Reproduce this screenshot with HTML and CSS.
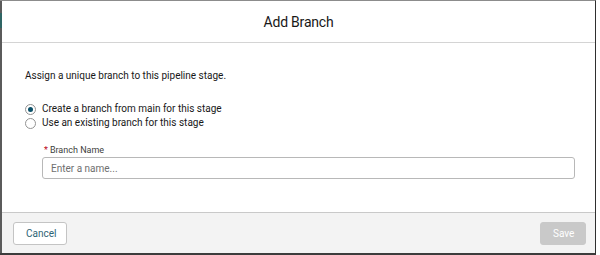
FILE: index.html
```html
<!DOCTYPE html>
<html lang="en">
<head>
    <meta charset="UTF-8">
    <title>Add Branch</title>
    <link rel="stylesheet" href="styles.css">
</head>
<body>
    <div class="backdrop">
        <div class="modal">
            <div class="modal-header">
                <h2 class="title">Add Branch</h2>
            </div>
            <div class="modal-body">
                <p class="intro">Assign a unique branch to this pipeline stage.</p>
                <div class="radio-group">
                    <label class="radio">
                        <input type="radio" name="mode" checked>
                        <span class="faux"></span>
                        <span class="radio-label">Create a branch from main for this stage</span>
                    </label>
                    <label class="radio">
                        <input type="radio" name="mode">
                        <span class="faux"></span>
                        <span class="radio-label">Use an existing branch for this stage</span>
                    </label>
                </div>
                <div class="field">
                    <label class="field-label" for="branch"><abbr class="required">*</abbr>Branch Name</label>
                    <input id="branch" class="input" type="text" placeholder="Enter a name...">
                </div>
            </div>
            <div class="modal-footer">
                <button class="btn btn-neutral">Cancel</button>
                <button class="btn btn-disabled" disabled>Save</button>
            </div>
        </div>
    </div>
</body>
</html>
```

FILE: styles.css
```css
html, body{
    margin: 0;
    padding: 0;
    background: #fff;
}
body{
    font-family: Roboto, "Liberation Sans", Arial, sans-serif;
    color: #181818;
}
.backdrop{
    width: 596px;
    height: 255px;
    box-sizing: border-box;
    padding-left: 2px;
    background: linear-gradient(to bottom, #5b5b5b 0 12px, #2f6564 12px 27px, #5b5b5b 27px);
    border-top: 1px solid #8c8c8c;
    border-right: 1px solid #2f2f2f;
    border-bottom: 2px solid #3c3c3c;
}
.modal{
    display: flex;
    flex-direction: column;
    height: 100%;
    background: #fff;
}
.modal-header{
    height: 41px;
    display: flex;
    align-items: center;
    justify-content: center;
    border-bottom: 1px solid #d4d4d4;
}
.title{
    margin: 0;
    font-size: 14px;
    font-weight: 400;
    letter-spacing: -0.2px;
}
.modal-body{
    flex: 1;
    padding: 26px 0 0 23px;
    font-size: 10px;
}
.intro{
    margin: 0 0 20px;
    line-height: 14px;
}
.radio-group{
    display: flex;
    flex-direction: column;
    gap: 2px;
}
.radio{
    display: flex;
    align-items: center;
    gap: 6px;
    height: 12px;
    line-height: 12px;
}
.radio input{
    display: none;
}
.radio .faux{
    width: 11px;
    height: 11px;
    box-sizing: border-box;
    border: 1px solid #939393;
    border-radius: 50%;
    background: #fff;
    display: flex;
    align-items: center;
    justify-content: center;
}
.radio input:checked + .faux::after{
    content: "";
    width: 5px;
    height: 5px;
    border-radius: 50%;
    background: #0b5069;
}
.field{
    margin: 15px 0 0 17px;
    width: 533px;
}
.field-label{
    display: block;
    color: #3e3e3c;
    font-size: 9px;
    line-height: 12px;
    margin: 0 0 1px 2px;
}
.required{
    color: #ba0517;
    text-decoration: none;
    margin-right: 2px;
}
.input{
    display: block;
    width: 100%;
    height: 22px;
    box-sizing: border-box;
    border: 1px solid #b8b8b8;
    border-radius: 3px;
    padding: 0 8px;
    font-family: inherit;
    font-size: 10px;
    color: #181818;
    outline: none;
}
.input::placeholder{
    color: #6f6f6f;
}
.modal-footer{
    height: 41px;
    box-sizing: border-box;
    border-top: 1px solid #c9c9c9;
    background: #f3f3f3;
    display: flex;
    align-items: center;
    justify-content: space-between;
    padding: 0 9px 0 11px;
}
.btn{
    height: 23px;
    border-radius: 3px;
    font-family: inherit;
    font-size: 10px;
    padding: 0 12px;
}
.btn-neutral{
    background: #fff;
    border: 1px solid #c4c4c4;
    color: #2e6474;
    width: 54px;
}
.btn-disabled{
    background: #c9c9c9;
    border: 1px solid #c9c9c9;
    color: #fff;
    width: 46px;
}
```
